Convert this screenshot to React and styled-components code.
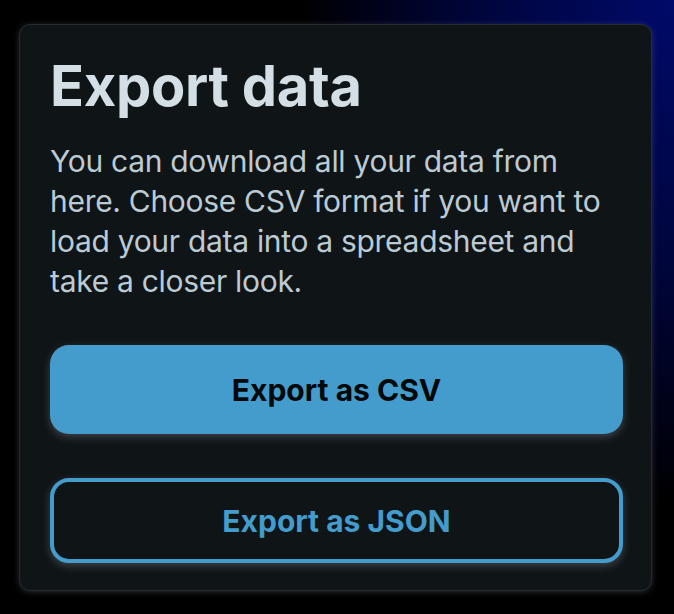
import React from 'react';
import styled, { createGlobalStyle } from 'styled-components';

const GlobalStyle = createGlobalStyle`
  html, body {
    margin: 0;
    padding: 0;
    height: 100%;
  }
  body {
    background: radial-gradient(ellipse 75% 110% at 100% 0%, #000a6a 0%, #00053a 40%, #000 75%);
    background-color: #000;
    font-family: Inter, "Noto Sans", sans-serif;
  }
`;

const Page = styled.div`
  padding: 24px 22px 23px 19px;
`;

const Card = styled.section`
  box-sizing: border-box;
  width: 633px;
  height: 567px;
  background: #0f1417;
  border: 1px solid #262c30;
  border-radius: 11px;
  box-shadow: 0 1px 6px rgba(160, 170, 180, 0.25);
  padding: 30px 28px 28px 30px;
  display: flex;
  flex-direction: column;
`;

const Title = styled.h1`
  margin: 0;
  font-size: 56px;
  font-weight: 700;
  line-height: 62px;
  color: #d3dfe4;
  letter-spacing: -0.3px;
`;

const Text = styled.p`
  margin: 24px 0 0;
  font-size: 30px;
  line-height: 40px;
  color: #bccbd3;
  letter-spacing: -0.3px;
`;

const Actions = styled.div`
  margin-top: 44px;
  display: flex;
  flex-direction: column;
  gap: 44px;
`;

const Button = styled.button`
  box-sizing: border-box;
  width: 100%;
  height: ${p => (p.$outline ? '85px' : '89px')};
  border-radius: 19px;
  border: ${p => (p.$outline ? '4px solid #439ccc' : 'none')};
  background: ${p => (p.$outline ? '#0f1417' : '#439ccc')};
  color: ${p => (p.$outline ? '#439ccc' : '#050809')};
  font-family: Inter, "Noto Sans", sans-serif;
  font-size: 30px;
  font-weight: 700;
  box-shadow: 0 3px 8px rgba(170, 180, 190, 0.3);
  cursor: pointer;
`;

export default function App() {
  return (
    <>
      <GlobalStyle />
      <Page>
        <Card>
          <Title>Export data</Title>
          <Text>
            You can download all your data from here. Choose CSV format if you want to load
            your data into a spreadsheet and take a closer look.
          </Text>
          <Actions>
            <Button>Export as CSV</Button>
            <Button $outline>Export as JSON</Button>
          </Actions>
        </Card>
      </Page>
    </>
  );
}
